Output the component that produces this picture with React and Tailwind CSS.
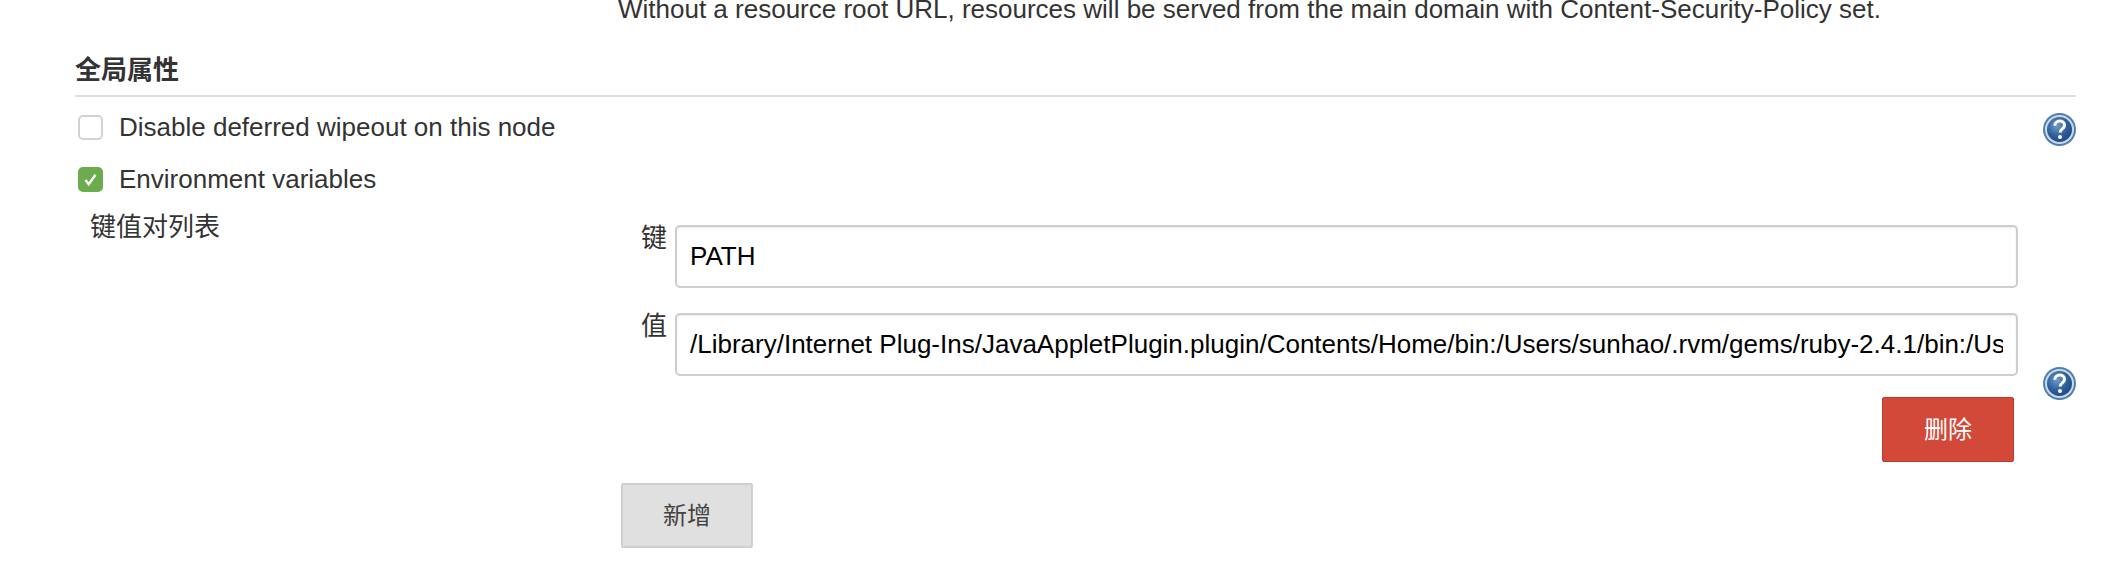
import React from 'react';

const FONT = "font-['Liberation_Sans','Noto_Sans_CJK_SC',sans-serif]";

const HelpIcon = () => (
  <svg width="33" height="33" viewBox="0 0 33 33" className="block shrink-0">
    <defs>
      <radialGradient id="helpFill" cx="40%" cy="35%" r="70%">
        <stop offset="0%" stopColor="#6f9bc9" />
        <stop offset="60%" stopColor="#2f5f9a" />
        <stop offset="100%" stopColor="#1d4580" />
      </radialGradient>
    </defs>
    <circle cx="16.5" cy="16.5" r="16.5" fill="#4f7fb2" />
    <circle cx="16.5" cy="16.5" r="14.5" fill="#c9d9ea" />
    <circle cx="16.5" cy="16.5" r="12.5" fill="url(#helpFill)" />
    <path d="M11.8 12.8c0-3 2.2-4.7 4.9-4.7s4.8 1.6 4.8 4.1c0 3.6-4.4 3.6-4.4 7.2" fill="none" stroke="#fff" strokeWidth="3" />
    <circle cx="17" cy="24" r="2" fill="#fff" />
  </svg>
);

const Checkbox = ({ checked }) => (
  <span
    className={`flex h-[25px] w-[25px] shrink-0 items-center justify-center rounded-[5px] border-2 ${
      checked ? 'border-[#6bad4c] bg-[#6bad4c]' : 'border-[#d2d2d2] bg-white'
    }`}
  >
    {checked && (
      <svg width="17" height="17" viewBox="0 0 17 17">
        <path d="M3.5 9l3.2 4.2L13.5 3.8" fill="none" stroke="#fff" strokeWidth="2.4" />
      </svg>
    )}
  </span>
);

const CheckRow = ({ checked, label, className }) => (
  <label className={`flex items-center gap-4 pl-[3px] ${className}`}>
    <Checkbox checked={checked} />
    <span className="text-[26px] leading-[32px] text-[#333]">{label}</span>
  </label>
);

const Field = ({ label, value, className }) => (
  <div className={`flex h-[63px] items-start ${className}`}>
    <span className="w-[57px] pl-[23px] pt-[1px] text-[26px] leading-[25px] text-[#333]">{label}</span>
    <input
      readOnly
      value={value}
      className="h-[63px] w-[1343px] rounded-[5px] border-2 border-[#cdcdcd] bg-white px-[13px] text-[26px] text-black shadow-[inset_0_1px_2px_rgba(0,0,0,0.08)] outline-none"
    />
  </div>
);

export default function App() {
  return (
    <div className={`${FONT} h-[568px] w-[2112px] overflow-hidden bg-white pl-[75px] pr-[36px]`}>
      <p className="-mt-[7px] pl-[543px] text-[26px] leading-[32px] text-[#333] whitespace-nowrap">
        Without a resource root URL, resources will be served from the main domain with Content-Security-Policy set.
      </p>

      <h3 className="mt-[28px] border-b-2 border-[#dedede] pb-[7px] text-[26px] font-bold leading-[35px] text-[#333]">全局属性</h3>

      <div className="mt-[14px] flex items-start justify-between">
        <CheckRow label="Disable deferred wipeout on this node" />
        <div className="mt-[2px]">
          <HelpIcon />
        </div>
      </div>
      <CheckRow checked label="Environment variables" className="mt-[17px]" />

      <div className="mt-[16px] flex items-start">
        <span className="ml-[15px] w-[528px] text-[26px] leading-[32px] text-[#333]">键值对列表</span>
        <div className="flex flex-col">
          <Field label="键" value="PATH" className="mt-[14px]" />
          <Field
            label="值"
            value="/Library/Internet Plug-Ins/JavaAppletPlugin.plugin/Contents/Home/bin:/Users/sunhao/.rvm/gems/ruby-2.4.1/bin:/Users/sunhao/.rvm/gems/ruby-2.4.1@global/bin"
            className="mt-[25px]"
          />
          <div className="mt-[21px] flex justify-end pr-[4px]">
            <button className="h-[65px] w-[132px] rounded-[2px] border border-[#c0392b] bg-[#d24939] text-[24px] text-white">删除</button>
          </div>
          <button className="mt-[21px] ml-[3px] h-[65px] w-[132px] rounded-[2px] border-2 border-[#cfcfcf] bg-[#e0e0e0] text-[24px] text-[#444]">新增</button>
        </div>
        <div className="ml-[25px] mt-[156px]">
          <HelpIcon />
        </div>
      </div>
    </div>
  );
}
